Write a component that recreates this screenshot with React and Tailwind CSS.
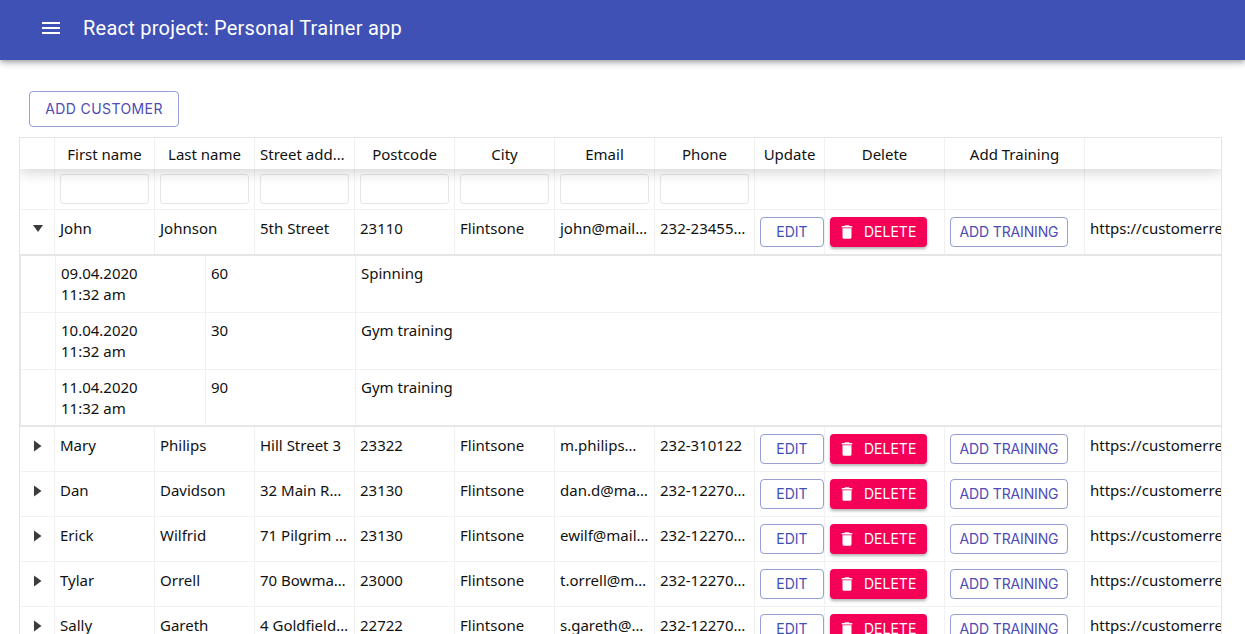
const customers = [
  ["Mary", "Philips", "Hill Street 3", "23322", "Flintsone", "m.philips@mail.com", "232-310122"],
  ["Dan", "Davidson", "32 Main Road", "23130", "Flintsone", "dan.d@mail.com", "232-12270000"],
  ["Erick", "Wilfrid", "71 Pilgrim Avenue", "23130", "Flintsone", "ewilf@mail.com", "232-12270000"],
  ["Tylar", "Orrell", "70 Bowman Street", "23000", "Flintsone", "t.orrell@mail.com", "232-12270000"],
  ["Sally", "Gareth", "4 Goldfield Road", "22722", "Flintsone", "s.gareth@mail.com", "232-12270000"],
];

const trainings = [
  ["09.04.2020", "60", "Spinning"],
  ["10.04.2020", "30", "Gym training"],
  ["11.04.2020", "90", "Gym training"],
];

const headers = [
  ["First name", "w-[100px]"],
  ["Last name", "w-[100px]"],
  ["Street address", "w-[100px]"],
  ["Postcode", "w-[100px]"],
  ["City", "w-[100px]"],
  ["Email", "w-[100px]"],
  ["Phone", "w-[100px]"],
  ["Update", "w-[70px]"],
  ["Delete", "w-[120px]"],
  ["Add Training", "w-[140px]"],
];

function TextCell({ children }) {
  return (
    <div className="w-[100px] shrink-0 border-r border-[#f1f1f1] px-[5px] pt-[7px] truncate">
      {children}
    </div>
  );
}

function TrashIcon() {
  return (
    <svg viewBox="0 0 24 24" className="w-[18px] h-[18px] fill-white">
      <path d="M6 19c0 1.1.9 2 2 2h8c1.1 0 2-.9 2-2V7H6v12zM19 4h-3.5l-1-1h-5l-1 1H5v2h14V4z" />
    </svg>
  );
}

function Row({ data, open }) {
  return (
    <div className={`flex shrink-0 ${open ? "h-[44px]" : "h-[45px] border-b border-[#f1f1f1]"}`}>
      <div className="w-[35px] shrink-0 border-r border-[#f1f1f1] flex justify-center pl-[2px] pt-[13px]">
        <svg viewBox="0 0 12 12" className="w-3 h-3 fill-[#3c3c3c]">
          {open ? <polygon points="1,2 11,2 6,9" /> : <polygon points="2,0.5 9.5,6 2,11.5" />}
        </svg>
      </div>
      {data.map((value, i) => (
        <TextCell key={i}>{value}</TextCell>
      ))}
      <div className="w-[70px] shrink-0 border-r border-[#f1f1f1] px-[5px] pt-[7px]">
        <button className="w-[64px] h-[30px] flex items-center justify-center pb-px rounded border border-[#3f51b5]/55 text-[#3f51b5] text-sm font-['Inter',sans-serif]">
          EDIT
        </button>
      </div>
      <div className="w-[120px] shrink-0 border-r border-[#f1f1f1] px-[5px] pt-[7px]">
        <button className="w-[97px] h-[30px] flex items-center pl-2 pb-px gap-2 rounded bg-[#f50057] text-white text-sm font-['Inter',sans-serif] shadow-[0_2px_3px_rgba(0,0,0,0.3)]">
          <TrashIcon />
          DELETE
        </button>
      </div>
      <div className="w-[140px] shrink-0 border-r border-[#f1f1f1] px-[5px] pt-[7px]">
        <button className="w-[118px] h-[30px] flex items-center justify-center pb-px rounded border border-[#3f51b5]/55 text-[#4d4bb5] text-sm tracking-[-0.15px] font-['Inter',sans-serif]">
          ADD TRAINING
        </button>
      </div>
      <div className="w-[200px] shrink-0 px-[5px] pt-[7px] whitespace-nowrap">https://customerrest.herokuapp.com/api/customers</div>
    </div>
  );
}

function Trainings() {
  return (
    <div className="border-l border-t-2 border-[#e6e6e6]">
      {trainings.map((t, i) => (
        <div key={t[0]} className={`flex h-[57px] ${i < 2 ? "border-b border-[#f1f1f1]" : "border-b-2 border-[#e6e6e6]"}`}>
          <div className="w-[35px] shrink-0 border-r border-[#f1f1f1]" />
          <div className="w-[150px] shrink-0 border-r border-[#f1f1f1] px-[5px] pt-[7px] leading-[21px]">
            {t[0]}
            <br />
            11:32 am
          </div>
          <div className="w-[150px] shrink-0 border-r border-[#f1f1f1] px-[5px] pt-[7px] leading-[21px]">{t[1]}</div>
          <div className="px-[5px] pt-[7px] leading-[21px]">{t[2]}</div>
        </div>
      ))}
    </div>
  );
}

export default function App() {
  return (
    <div className="h-screen overflow-hidden bg-white flex flex-col">
      <header className="h-[60px] shrink-0 bg-[#3f51b5] flex items-center pl-[39px] pb-1 gap-5 text-white shadow-[0_2px_4px_-1px_rgba(0,0,0,0.2),0_4px_5px_0_rgba(0,0,0,0.14),0_1px_10px_0_rgba(0,0,0,0.12)]">
        <svg viewBox="0 0 24 24" className="w-6 h-6 fill-white">
          <path d="M3 18h18v-2H3v2zm0-5h18v-2H3v2zm0-7v2h18V6H3z" />
        </svg>
        <h1 className="text-xl font-normal tracking-[0.25px] font-['Roboto',sans-serif]">React project: Personal Trainer app</h1>
      </header>

      <div className="pl-[29px] pt-[31px] pb-[10px]">
        <button className="h-9 w-[150px] rounded border border-[#3f51b5]/55 text-[#4d4bb5] text-sm tracking-[0.4px] font-['Inter',sans-serif]">
          ADD CUSTOMER
        </button>
      </div>

      <div className="ml-[19px] w-[1203px] border border-[#e4e4e4] border-b-0 overflow-hidden font-['Noto_Sans',sans-serif] text-[15px] text-[#111] leading-[22px]">
        <div className="w-[1400px]">
          <div className="relative z-10 flex h-[31px] w-[1203px] bg-white shadow-[0_2px_15px_0_rgba(0,0,0,0.2)]">
            <div className="w-[35px] shrink-0 border-r border-[#f1f1f1]" />
            {headers.map(([label, width]) => (
              <div key={label} className={`${width} shrink-0 border-r border-[#f1f1f1] px-[5px] pt-[5px] text-center truncate`}>
                {label}
              </div>
            ))}
          </div>
          <div className="flex h-[41px] border-b border-[#f1f1f1]">
            <div className="w-[35px] shrink-0 border-r border-[#f1f1f1]" />
            {headers.map(([label, width], i) => (
              <div key={label} className={`${width} shrink-0 border-r border-[#f1f1f1] px-[5px] pt-[5px]`}>
                {i < 7 && <input className="w-[89px] h-[30px] rounded-[3px] border border-[#e6e6e6] bg-white" aria-label={label} />}
              </div>
            ))}
          </div>
          <Row open data={["John", "Johnson", "5th Street", "23110", "Flintsone", "john@mail.com", "232-2345540"]} />
          <Trainings />
          {customers.map((c) => (
            <Row key={c[0]} data={c} />
          ))}
        </div>
      </div>
    </div>
  );
}
